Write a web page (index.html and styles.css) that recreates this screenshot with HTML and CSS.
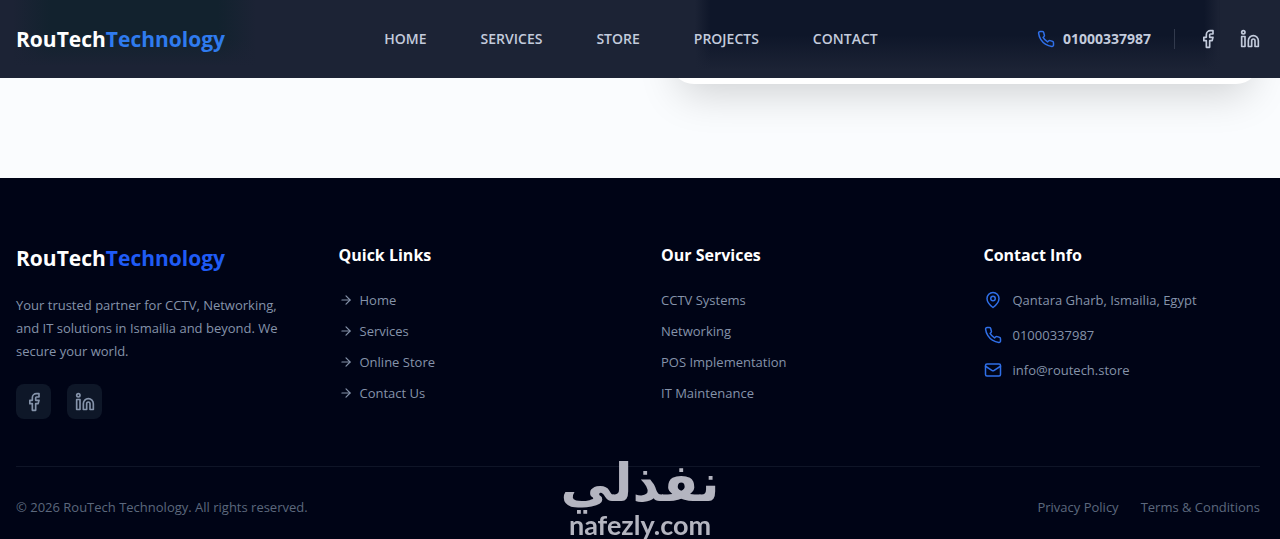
FILE: index.html
```html
<!DOCTYPE html>
<html lang="en">
  <head>
    <meta charset="UTF-8" />
    <meta name="viewport" content="width=device-width, initial-scale=1.0" />
    <title>RouTech Technology</title>
    <link rel="stylesheet" href="styles.css">
  </head>
  <body>
    <!-- shared icons -->
    <svg class="sprite" aria-hidden="true">
      <symbol id="icon-facebook" viewBox="0 0 24 24">
        <path d="M18 2h-3a5 5 0 0 0-5 5v3H7v4h3v8h4v-8h3l1-4h-4V7a1 1 0 0 1 1-1h3z" />
      </symbol>
      <symbol id="icon-linkedin" viewBox="0 0 24 24">
        <path d="M16 8a6 6 0 0 1 6 6v7h-4v-7a2 2 0 0 0-2-2 2 2 0 0 0-2 2v7h-4v-7a6 6 0 0 1 6-6z" />
        <rect x="2" y="9" width="4" height="12" />
        <circle cx="4" cy="4" r="2" />
      </symbol>
      <symbol id="icon-phone" viewBox="0 0 24 24">
        <path d="M22 16.92v3a2 2 0 0 1-2.18 2 19.79 19.79 0 0 1-8.63-3.07 19.5 19.5 0 0 1-6-6 19.79 19.79 0 0 1-3.07-8.67A2 2 0 0 1 4.11 2h3a2 2 0 0 1 2 1.72 12.84 12.84 0 0 0 .7 2.81 2 2 0 0 1-.45 2.11L8.09 9.91a16 16 0 0 0 6 6l1.27-1.27a2 2 0 0 1 2.11-.45 12.84 12.84 0 0 0 2.81.7A2 2 0 0 1 22 16.92z" />
      </symbol>
      <symbol id="icon-pin" viewBox="0 0 24 24">
        <path d="M20 10c0 6-8 12-8 12s-8-6-8-12a8 8 0 0 1 16 0Z" />
        <circle cx="12" cy="10" r="3" />
      </symbol>
      <symbol id="icon-mail" viewBox="0 0 24 24">
        <rect x="2" y="4" width="20" height="16" rx="2" />
        <path d="m22 7-8.97 5.7a1.94 1.94 0 0 1-2.06 0L2 7" />
      </symbol>
      <symbol id="icon-arrow" viewBox="0 0 24 24">
        <path d="M5 12h14" />
        <path d="m12 5 7 7-7 7" />
      </symbol>
    </svg>

    <header class="header">
      <div class="container header-inner">
        <a href="#" class="logo">RouTech<span>Technology</span></a>
        <nav class="nav">
          <a href="#">HOME</a>
          <a href="#">SERVICES</a>
          <a href="#">STORE</a>
          <a href="#">PROJECTS</a>
          <a href="#">CONTACT</a>
        </nav>
        <div class="header-contact">
          <a href="tel:01000337987" class="phone">
            <svg class="icon blue"><use href="#icon-phone" /></svg>01000337987
          </a>
          <div class="header-social">
            <a href="#" aria-label="Facebook"><svg class="icon large"><use href="#icon-facebook" /></svg></a>
            <a href="#" aria-label="LinkedIn"><svg class="icon large"><use href="#icon-linkedin" /></svg></a>
          </div>
        </div>
      </div>
    </header>

    <main class="section">
      <div class="container section-grid">
        <div class="card"></div>
      </div>
    </main>

    <footer class="footer">
      <div class="container">
        <div class="footer-grid">
          <div>
            <a href="#" class="logo">RouTech<span>Technology</span></a>
            <p class="about">Your trusted partner for CCTV, Networking, and IT solutions in Ismailia and beyond. We secure your world.</p>
            <div class="social">
              <a href="#" aria-label="Facebook"><svg class="icon large"><use href="#icon-facebook" /></svg></a>
              <a href="#" aria-label="LinkedIn"><svg class="icon large"><use href="#icon-linkedin" /></svg></a>
            </div>
          </div>
          <div>
            <h3>Quick Links</h3>
            <ul class="links">
              <li><a href="#"><svg class="icon small"><use href="#icon-arrow" /></svg>Home</a></li>
              <li><a href="#"><svg class="icon small"><use href="#icon-arrow" /></svg>Services</a></li>
              <li><a href="#"><svg class="icon small"><use href="#icon-arrow" /></svg>Online Store</a></li>
              <li><a href="#"><svg class="icon small"><use href="#icon-arrow" /></svg>Contact Us</a></li>
            </ul>
          </div>
          <div>
            <h3>Our Services</h3>
            <ul class="links">
              <li>CCTV Systems</li>
              <li>Networking</li>
              <li>POS Implementation</li>
              <li>IT Maintenance</li>
            </ul>
          </div>
          <div>
            <h3>Contact Info</h3>
            <ul class="links contact">
              <li><svg class="icon blue"><use href="#icon-pin" /></svg>Qantara Gharb, Ismailia, Egypt</li>
              <li><svg class="icon blue"><use href="#icon-phone" /></svg>01000337987</li>
              <li><svg class="icon blue"><use href="#icon-mail" /></svg>info@routech.store</li>
            </ul>
          </div>
        </div>
        <div class="bottom">
          <p>© 2026 RouTech Technology. All rights reserved.</p>
          <div class="legal">
            <a href="#">Privacy Policy</a>
            <a href="#">Terms &amp; Conditions</a>
          </div>
        </div>
      </div>
    </footer>

    <div class="watermark">
      <span class="watermark-ar" lang="ar" dir="rtl">نفذلي</span>
      <span class="watermark-en">nafezly.com</span>
    </div>
  </body>
</html>
```
FILE: styles.css
```css
* {
  box-sizing: border-box;
}

body {
  margin: 0;
  font-family: "Segoe UI", "Open Sans", "Noto Sans", sans-serif;
  font-size: 13px;
  line-height: 20px;
  color: #8593aa;
  background-color: #000416;
}

a {
  color: inherit;
  text-decoration: none;
}

p,
h3,
ul {
  margin: 0;
  padding: 0;
}

ul {
  list-style: none;
}

.sprite {
  display: none;
}

.icon {
  width: 18px;
  height: 18px;
  flex-shrink: 0;
  fill: none;
  stroke: currentColor;
  stroke-width: 2;
  stroke-linecap: round;
  stroke-linejoin: round;
}

.icon.small {
  width: 14px;
  height: 14px;
}

.icon.large {
  width: 20px;
  height: 20px;
}

.icon.blue {
  color: #2f6fe8;
}

.container {
  padding: 0 20px 0 16px;
}

.logo {
  display: block;
  font-size: 21px;
  font-weight: 700;
  line-height: 32px;
  color: #fff;
}

.logo span {
  color: #1f5bf5;
}

/* Header */
.header {
  position: fixed;
  top: 0;
  left: 0;
  right: 0;
  z-index: 10;
  background:
    linear-gradient(90deg, #1c2335, transparent 3% 97%, #1c2335) 92% 0 / 41% 100% no-repeat,
    linear-gradient(#0e1629 45%, #1c2335 90%) 92% 0 / 41% 100% no-repeat,
    linear-gradient(transparent 50%, #1c2335 85%) 0 0 / 20% 100% no-repeat,
    linear-gradient(90deg, #1c2335 5%, #12222e 20% 85%, #1c2335) 0 0 / 20% 100% no-repeat,
    #1c2335;
}

.header-inner {
  display: flex;
  align-items: center;
  justify-content: space-between;
  height: 78px;
}

.header .logo span {
  color: #2f7bee;
}

.nav {
  display: flex;
  gap: 54px;
  font-size: 14px;
  font-weight: 600;
  color: #c3cbdc;
}

.header-contact {
  display: flex;
  align-items: center;
  gap: 23px;
  color: #c3cbdc;
}

.phone {
  display: flex;
  align-items: center;
  gap: 8px;
  font-size: 14px;
  font-weight: 700;
}

.header-social {
  display: flex;
  gap: 22px;
  padding-left: 23px;
  border-left: 1px solid #323a4d;
}

.header-social a {
  display: flex;
}

/* Content behind the header */
.section {
  padding-bottom: 94px;
  background-color: #fafcfe;
}

.section-grid {
  display: grid;
  grid-template-columns: 1fr 1fr;
  gap: 64px;
}

.card {
  grid-column: 2;
  height: 84px;
  border-radius: 24px;
  background-color: #fff;
  box-shadow: 0 20px 40px -10px rgba(0, 0, 0, 0.17);
}

/* Footer */
.footer {
  position: relative;
  padding: 64px 0 20px;
  background-color: #000416;
}

.footer-grid {
  display: grid;
  grid-template-columns: repeat(4, 1fr);
  gap: 46px;
  padding-bottom: 47px;
}

.about {
  margin-top: 20px;
  line-height: 23px;
}

.social {
  display: flex;
  gap: 16px;
  margin-top: 21px;
}

.social a {
  display: flex;
  align-items: center;
  justify-content: center;
  width: 35px;
  height: 35px;
  border-radius: 8px;
  background-color: #0e1728;
}

h3 {
  font-size: 16px;
  line-height: 26px;
  color: #fff;
}

.links {
  display: grid;
  gap: 11px;
  margin-top: 22px;
}

.links a,
.contact li {
  display: flex;
  align-items: center;
  gap: 7px;
}

.contact {
  gap: 15px;
}

.contact li {
  gap: 11px;
}

.bottom {
  display: flex;
  align-items: center;
  justify-content: space-between;
  padding-top: 30px;
  border-top: 1px solid #0f1527;
  color: #5c687d;
}

.legal {
  display: flex;
  gap: 22px;
}

/* Watermark */
.watermark {
  position: fixed;
  left: 0;
  right: 0;
  bottom: 0;
  z-index: 20;
  display: flex;
  flex-direction: column;
  align-items: center;
  color: #b4b5c0;
  font-weight: 700;
  pointer-events: none;
}

.watermark-ar {
  font-family: "DejaVu Sans", sans-serif;
  font-size: 52px;
  line-height: 56px;
}

.watermark-en {
  font-family: "Lato", sans-serif;
  font-size: 27px;
  line-height: 28px;
}
```
